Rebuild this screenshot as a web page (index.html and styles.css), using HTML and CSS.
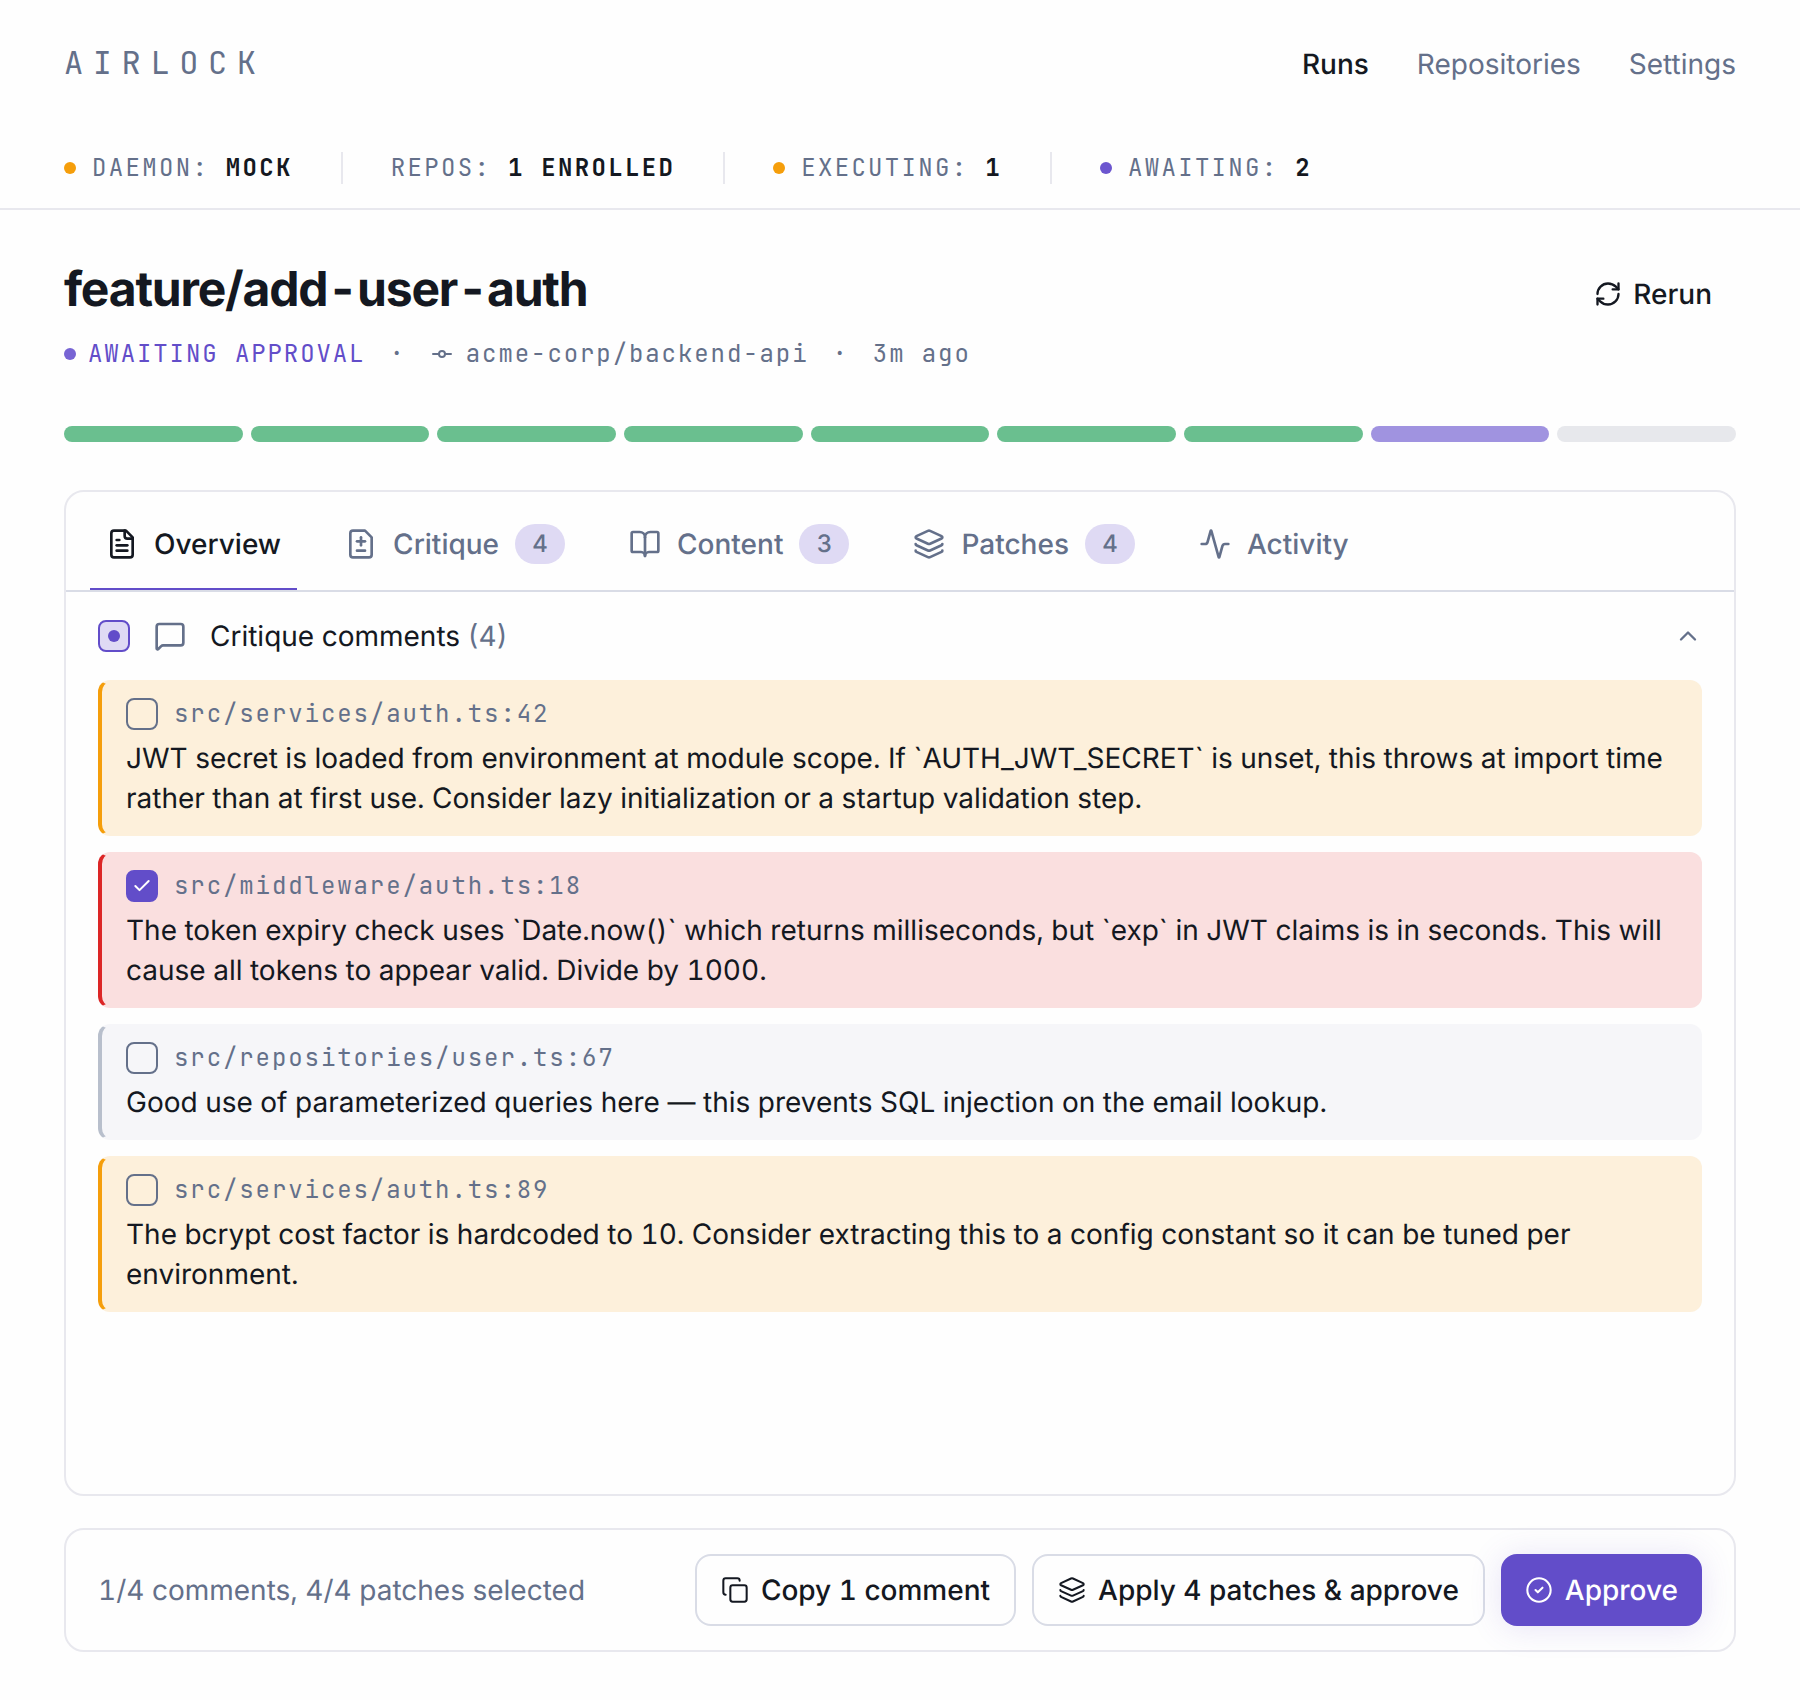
FILE: index.html
```html
<!DOCTYPE html>
<html lang="en">
<head>
  <meta charset="UTF-8">
  <meta name="viewport" content="width=device-width, initial-scale=1.0">
  <title>Airlock - feature/add-user-auth</title>
  <link rel="stylesheet" href="styles.css">
</head>
<body>

  <!-- Shared icons -->
  <svg class="sprite" xmlns="http://www.w3.org/2000/svg">
    <symbol id="i-layers" viewBox="0 0 24 24">
      <path d="M12.83 2.18a2 2 0 0 0-1.66 0L2.6 6.08a1 1 0 0 0 0 1.83l8.58 3.91a2 2 0 0 0 1.66 0l8.58-3.9a1 1 0 0 0 0-1.83z"/>
      <path d="M2 12a1 1 0 0 0 .58.91l8.6 3.91a2 2 0 0 0 1.65 0l8.58-3.9A1 1 0 0 0 22 12"/>
      <path d="M2 17a1 1 0 0 0 .58.91l8.6 3.91a2 2 0 0 0 1.65 0l8.58-3.9A1 1 0 0 0 22 17"/>
    </symbol>
  </svg>

  <header class="header">
    <div class="topbar">
      <div class="logo">AIRLOCK</div>
      <nav class="nav">
        <a class="active">Runs</a>
        <a>Repositories</a>
        <a>Settings</a>
      </nav>
    </div>
    <div class="status">
      <div class="status-item"><i class="dot amber"></i><span>DAEMON: <b>MOCK</b></span></div>
      <div class="divider"></div>
      <div class="status-item"><span>REPOS: <b>1 ENROLLED</b></span></div>
      <div class="divider"></div>
      <div class="status-item"><i class="dot amber"></i><span>EXECUTING: <b>1</b></span></div>
      <div class="divider"></div>
      <div class="status-item"><i class="dot purple"></i><span>AWAITING: <b>2</b></span></div>
    </div>
  </header>

  <main class="main">
    <div class="run-header">
      <div>
        <h1>feature/add-user-auth</h1>
        <div class="meta">
          <span class="run-state"><i class="dot purple"></i>AWAITING APPROVAL</span>
          <span>·</span>
          <span class="repo">
            <svg class="icon" viewBox="0 0 24 24"><circle cx="12" cy="12" r="3"/><path d="M3 12h6M15 12h6"/></svg>acme-corp/backend-api
          </span>
          <span>·</span>
          <span>3m ago</span>
        </div>
      </div>
      <button class="btn ghost">
        <svg class="icon" viewBox="0 0 24 24"><path d="M3 12a9 9 0 0 1 9-9 9.75 9.75 0 0 1 6.74 2.74L21 8"/><path d="M21 3v5h-5"/><path d="M21 12a9 9 0 0 1-9 9 9.75 9.75 0 0 1-6.74-2.74L3 16"/><path d="M8 16H3v5"/></svg>
        Rerun
      </button>
    </div>

    <div class="progress">
      <span class="done"></span>
      <span class="done"></span>
      <span class="done"></span>
      <span class="done"></span>
      <span class="done"></span>
      <span class="done"></span>
      <span class="done"></span>
      <span class="waiting"></span>
      <span></span>
    </div>

    <section class="card">
      <div class="tabs">
        <div class="tab active">
          <svg class="icon" viewBox="0 0 24 24"><path d="M15 2H6a2 2 0 0 0-2 2v16a2 2 0 0 0 2 2h12a2 2 0 0 0 2-2V7Z"/><path d="M14 2v4a2 2 0 0 0 2 2h4"/><path d="M10 9H8"/><path d="M16 13H8"/><path d="M16 17H8"/></svg>
          Overview
        </div>
        <div class="tab">
          <svg class="icon" viewBox="0 0 24 24"><path d="M15 2H6a2 2 0 0 0-2 2v16a2 2 0 0 0 2 2h12a2 2 0 0 0 2-2V7Z"/><path d="M9 10h6"/><path d="M12 13V7"/><path d="M9 17h6"/></svg>
          Critique
          <span class="badge">4</span>
        </div>
        <div class="tab">
          <svg class="icon" viewBox="0 0 24 24"><path d="M12 7v14"/><path d="M3 18a1 1 0 0 1-1-1V4a1 1 0 0 1 1-1h5a4 4 0 0 1 4 4 4 4 0 0 1 4-4h5a1 1 0 0 1 1 1v13a1 1 0 0 1-1 1h-6a3 3 0 0 0-3 3 3 3 0 0 0-3-3z"/></svg>
          Content
          <span class="badge">3</span>
        </div>
        <div class="tab">
          <svg class="icon"><use href="#i-layers"/></svg>
          Patches
          <span class="badge">4</span>
        </div>
        <div class="tab">
          <svg class="icon" viewBox="0 0 24 24"><path d="M22 12h-2.48a2 2 0 0 0-1.93 1.46l-2.35 8.36a.25.25 0 0 1-.48 0L9.24 2.18a.25.25 0 0 0-.48 0l-2.35 8.36A2 2 0 0 1 4.49 12H2"/></svg>
          Activity
        </div>
      </div>

      <div class="group-header">
        <span class="checkbox partial"></span>
        <svg class="icon" viewBox="0 0 24 24"><path d="M22 17a2 2 0 0 1-2 2H6.828a2 2 0 0 0-1.414.586l-2.202 2.202A.71.71 0 0 1 2 21.286V5a2 2 0 0 1 2-2h16a2 2 0 0 1 2 2z"/></svg>
        <span>Critique comments <span class="count">(4)</span></span>
        <svg class="icon chevron" viewBox="0 0 24 24"><path d="m18 15-6-6-6 6"/></svg>
      </div>

      <div class="comments">
        <article class="comment warning">
          <div class="file"><span class="checkbox"></span>src/services/auth.ts:42</div>
          <p>JWT secret is loaded from environment at module scope. If `AUTH_JWT_SECRET` is unset, this throws at import time rather than at first use. Consider lazy initialization or a startup validation step.</p>
        </article>
        <article class="comment error">
          <div class="file">
            <span class="checkbox checked"><svg class="icon" viewBox="0 0 24 24"><path d="M20 6 9 17l-5-5"/></svg></span>src/middleware/auth.ts:18
          </div>
          <p>The token expiry check uses `Date.now()` which returns milliseconds, but `exp` in JWT claims is in seconds. This will cause all tokens to appear valid. Divide by 1000.</p>
        </article>
        <article class="comment info">
          <div class="file"><span class="checkbox"></span>src/repositories/user.ts:67</div>
          <p>Good use of parameterized queries here — this prevents SQL injection on the email lookup.</p>
        </article>
        <article class="comment warning">
          <div class="file"><span class="checkbox"></span>src/services/auth.ts:89</div>
          <p>The bcrypt cost factor is hardcoded to 10. Consider extracting this to a config constant so it can be tuned per environment.</p>
        </article>
      </div>
    </section>

    <footer class="actions">
      <span class="summary">1/4 comments, 4/4 patches selected</span>
      <button class="btn outline">
        <svg class="icon" viewBox="0 0 24 24"><rect width="14" height="14" x="8" y="8" rx="2" ry="2"/><path d="M4 16c-1.1 0-2-.9-2-2V4c0-1.1.9-2 2-2h10c1.1 0 2 .9 2 2"/></svg>
        Copy 1 comment
      </button>
      <button class="btn outline">
        <svg class="icon"><use href="#i-layers"/></svg>
        Apply 4 patches &amp; approve
      </button>
      <button class="btn primary">
        <svg class="icon" viewBox="0 0 24 24"><circle cx="12" cy="12" r="10"/><path d="m9 12 2 2 4-4"/></svg>
        Approve
      </button>
    </footer>
  </main>

</body>
</html>
```
FILE: styles.css
```css
* {
  box-sizing: border-box;
}

body {
  margin: 0;
  background-color: #fefefe;
  color: #141821;
  font-family: Inter, sans-serif;
  font-size: 28px;
  line-height: 40px;
  font-variant-numeric: tabular-nums;
  text-rendering: geometricPrecision;
}

h1, p {
  margin: 0;
}

.sprite {
  display: none;
}

.icon {
  width: 32px;
  height: 32px;
  flex: none;
  fill: none;
  stroke: currentColor;
  stroke-width: 2;
  stroke-linecap: round;
  stroke-linejoin: round;
}

.dot {
  width: 12px;
  height: 12px;
  flex: none;
  border-radius: 50%;
}

.dot.amber {
  background-color: #f59e0b;
}

.dot.purple {
  background-color: #6c56cf;
}

.logo, .status, .meta, .file {
  color: #64708a;
  font-family: "JetBrains Mono", "DejaVu Sans Mono", monospace;
  font-size: 24px;
  text-rendering: auto;
}

/* Header */
.header {
  border-bottom: 2px solid #e8e8ee;
}

.topbar {
  display: flex;
  align-items: center;
  justify-content: space-between;
  height: 128px;
  padding: 0 64px;
}

.logo {
  padding-bottom: 2px;
  font-size: 32px;
  letter-spacing: 0.3em;
}

.nav {
  display: flex;
  gap: 48px;
  color: #64708a;
}

.nav .active {
  color: #141821;
  font-weight: 500;
}

.status {
  display: flex;
  align-items: center;
  gap: 48px;
  height: 80px;
  padding: 0 64px;
  letter-spacing: 2.33px;
}

.status-item {
  display: flex;
  align-items: center;
  gap: 16px;
}

.status b {
  color: #141821;
  font-weight: 600;
}

.divider {
  width: 2px;
  height: 32px;
  background-color: #e8e8ee;
}

/* Run header */
.main {
  padding: 48px 64px;
}

.run-header {
  display: flex;
  align-items: flex-start;
  justify-content: space-between;
}

h1 {
  padding-top: 1px;
  font-size: 48px;
  font-weight: 700;
  line-height: 60px;
  letter-spacing: -0.025em;
}

.meta {
  display: flex;
  align-items: center;
  gap: 24px;
  margin-top: 17px;
  line-height: 36px;
  letter-spacing: 0.08em;
}

.run-state, .repo {
  display: flex;
  align-items: center;
  gap: 12px;
}

.run-state {
  color: #624dc9;
}

.run-state .dot {
  background-color: #7764d4;
}

.repo .icon {
  width: 24px;
  height: 24px;
}

.progress {
  display: grid;
  grid-template-columns: repeat(9, 1fr);
  gap: 8px;
  margin: 54px 0 48px;
}

.progress span {
  height: 16px;
  border-radius: 8px;
  background-color: #e7e8ec;
}

.progress .done {
  background-color: #6abf8f;
}

.progress .waiting {
  background-color: #a093e0;
}

/* Tabs card */
.card {
  height: 1006px;
  border: 2px solid #e8e8ee;
  border-radius: 20px;
}

.tabs {
  display: flex;
  gap: 32px;
  height: 100px;
  padding: 0 24px;
  border-bottom: 2px solid #d9dce6;
}

.tab {
  display: flex;
  align-items: center;
  gap: 16px;
  padding: 8px 16px 0;
  border-bottom: 2px solid transparent;
  color: #64708a;
  font-weight: 500;
}

.tab.active {
  border-bottom-color: #624dc9;
  color: #141821;
}

.badge {
  width: 50px;
  border-radius: 20px;
  background-color: #dfdaf4;
  font-size: 24px;
  text-align: center;
}

.group-header {
  display: flex;
  align-items: center;
  gap: 24px;
  height: 88px;
  padding: 0 32px;
}

.group-header .icon, .count {
  color: #64708a;
}

.group-header .chevron {
  width: 28px;
  height: 28px;
  margin-left: auto;
}

.checkbox {
  display: flex;
  align-items: center;
  justify-content: center;
  width: 32px;
  height: 32px;
  border: 2px solid #64708a;
  border-radius: 8px;
}

.checkbox.partial {
  border-color: #624dc9;
  background-color: #dfdaf4;
}

.checkbox.partial::after {
  content: "";
  width: 12px;
  height: 12px;
  border-radius: 50%;
  background-color: #624dc9;
}

.checkbox.checked {
  border-color: #624dc9;
  background-color: #624dc9;
  color: #fff;
}

.checkbox .icon {
  width: 20px;
  height: 20px;
  stroke-width: 2.4;
}

.comments {
  display: flex;
  flex-direction: column;
  gap: 16px;
  padding: 0 32px;
}

.comment {
  padding: 16px 24px;
  border: 2px solid transparent;
  border-left-width: 4px;
  border-radius: 12px;
}

.comment.warning {
  border-left-color: #f59e0b;
  background-color: #fdf0db;
}

.comment.error {
  border-left-color: #dc2626;
  background-color: #fadfdf;
}

.comment.info {
  border-left-color: #b8bfcc;
  background-color: #f6f6f9;
}

.file {
  display: flex;
  align-items: center;
  gap: 16px;
  margin-bottom: 8px;
  line-height: 32px;
  letter-spacing: 0.08em;
}

/* Action bar */
.actions {
  display: flex;
  align-items: center;
  gap: 16px;
  height: 124px;
  margin-top: 32px;
  padding: 0 32px;
  border: 2px solid #e8e8ee;
  border-radius: 20px;
}

.summary {
  margin-right: auto;
  color: #64708a;
}

.btn {
  display: flex;
  align-items: center;
  gap: 12px;
  height: 72px;
  padding: 0 24px;
  border: none;
  border-radius: 16px;
  background: none;
  color: #141821;
  font: 500 28px Inter, sans-serif;
  font-variant-numeric: tabular-nums;
  text-rendering: geometricPrecision;
  cursor: pointer;
}

.btn .icon {
  width: 28px;
  height: 28px;
  stroke-width: 1.75;
}

.btn.ghost {
  gap: 11px;
}

.btn.ghost .icon {
  stroke-width: 2;
}

.btn.outline {
  border: 2px solid #d9dce6;
}

.btn.primary {
  background-color: #624dc9;
  color: #fff;
  box-shadow: 0 2px 32px rgba(98, 77, 201, 0.15);
}
```
